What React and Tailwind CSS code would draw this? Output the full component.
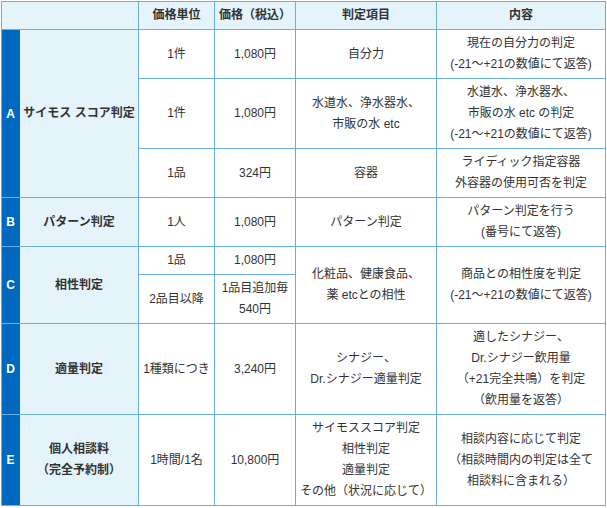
import React from "react";

const B = "border border-[#6aafe2]";
const td = `${B} text-center align-middle px-[2px] py-0 leading-[21px] text-[#333]`;
const red = "text-[#6b3434]";
const label = `${B} bg-[#e5f3fb] text-center align-middle font-bold leading-[21px] text-[#333]`;
const letter = `border border-[#6aafe2] border-r-[#0068be] bg-[#0068be] text-white font-bold text-center align-middle`;

export default function App() {
  return (
    <div className="pl-px pt-px bg-white w-[607px] h-[508px]" style={{}}>
      <table
        className="table-fixed border-collapse w-[604px] text-[12px]"
        style={{ fontFamily: '"Liberation Sans", "Noto Sans CJK JP", sans-serif' }}
      >
        <colgroup>
          <col className="w-[18px]" />
          <col className="w-[119px]" />
          <col className="w-[76px]" />
          <col className="w-[81px]" />
          <col className="w-[141px]" />
          <col className="w-[169px]" />
        </colgroup>
        <tbody>
          <tr className="h-[28px]">
            <th colSpan={2} className={`${B} bg-[#e5f3fb]`}></th>
            <th className={`${label} whitespace-nowrap`}>価格単位</th>
            <th className={`${label} whitespace-nowrap`}>価格（税込）</th>
            <th className={label}>判定項目</th>
            <th className={label}>内容</th>
          </tr>
          <tr className="h-[49px]">
            <td rowSpan={3} className={letter}>A</td>
            <td rowSpan={3} className={label}>サイモス スコア判定</td>
            <td className={`${td} ${red}`}>1件</td>
            <td className={td}>1,080円</td>
            <td className={td}>自分力</td>
            <td className={td}>
              現在の自分力の判定
              <br />
              (-21〜+21の数値にて返答)
            </td>
          </tr>
          <tr className="h-[70px]">
            <td className={`${td} ${red}`}>1件</td>
            <td className={td}>1,080円</td>
            <td className={td}>
              水道水、浄水器水、
              <br />
              市販の水 etc
            </td>
            <td className={td}>
              水道水、浄水器水、
              <br />
              市販の水 etc の判定
              <br />
              (-21〜+21の数値にて返答)
            </td>
          </tr>
          <tr className="h-[49px]">
            <td className={`${td} ${red}`}>1品</td>
            <td className={td}>324円</td>
            <td className={td}>容器</td>
            <td className={td}>
              ライディック指定容器
              <br />
              外容器の使用可否を判定
            </td>
          </tr>
          <tr className="h-[49px]">
            <td className={letter}>B</td>
            <td className={label}>パターン判定</td>
            <td className={`${td} ${red}`}>1人</td>
            <td className={td}>1,080円</td>
            <td className={td}>パターン判定</td>
            <td className={td}>
              パターン判定を行う
              <br />
              (番号にて返答)
            </td>
          </tr>
          <tr className="h-[28px]">
            <td rowSpan={2} className={letter}>C</td>
            <td rowSpan={2} className={label}>相性判定</td>
            <td className={`${td} ${red}`}>1品</td>
            <td className={td}>1,080円</td>
            <td rowSpan={2} className={td}>
              化粧品、健康食品、
              <br />
              薬 etcとの相性
            </td>
            <td rowSpan={2} className={td}>
              商品との相性度を判定
              <br />
              (-21〜+21の数値にて返答)
            </td>
          </tr>
          <tr className="h-[49px]">
            <td className={td}>2品目以降</td>
            <td className={td}>
              1品目追加毎
              <br />
              540円
            </td>
          </tr>
          <tr className="h-[91px]">
            <td className={letter}>D</td>
            <td className={label}>適量判定</td>
            <td className={`${td} whitespace-nowrap`}>1種類につき</td>
            <td className={td}>3,240円</td>
            <td className={td}>
              シナジー、
              <br />
              Dr.シナジー適量判定
            </td>
            <td className={td}>
              適したシナジー、
              <br />
              Dr.シナジー飲用量
              <br />
              （+21完全共鳴）を判定
              <br />
              （飲用量を返答）
            </td>
          </tr>
          <tr className="h-[91px]">
            <td className={letter}>E</td>
            <td className={label}>
              個人相談料
              <br />
              （完全予約制）
            </td>
            <td className={td}>1時間/1名</td>
            <td className={td}>10,800円</td>
            <td className={`${td} leading-[20px] whitespace-nowrap`}>
              サイモススコア判定
              <br />
              相性判定
              <br />
              適量判定
              <br />
              その他（状況に応じて）
            </td>
            <td className={td}>
              相談内容に応じて判定
              <br />
              （相談時間内の判定は全て
              <br />
              相談料に含まれる）
            </td>
          </tr>
        </tbody>
      </table>
    </div>
  );
}
